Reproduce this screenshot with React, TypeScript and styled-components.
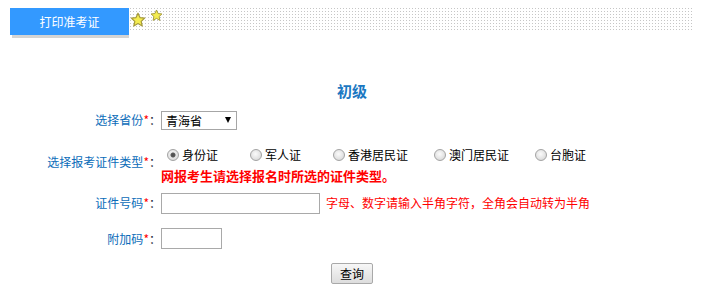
import React, { FC } from 'react';
import styled, { createGlobalStyle } from 'styled-components';

const GlobalStyle = createGlobalStyle`
  html, body {
    margin: 0;
    padding: 0;
    background: #ffffff;
  }
  body {
    font-family: "Noto Sans CJK SC", "Liberation Sans", sans-serif;
    font-size: 12px;
    color: #000;
  }
`;

const Page = styled.div`
  width: 684px;
  padding: 8px 32px 0 10px;
`;

const Header = styled.div`
  display: flex;
  align-items: flex-start;
  height: 30px;
`;

const Tab = styled.div`
  position: relative;
  width: 119px;
  height: 27px;
  display: flex;
  align-items: center;
  justify-content: center;
  background: #3399ff;
  color: #fff;
  font-size: 12px;
  line-height: 27px;

  &::after {
    content: '';
    position: absolute;
    left: 2px;
    right: 0;
    bottom: -3px;
    height: 3px;
    background: #d4d4d4;
  }
`;

const Dots = styled.div`
  position: relative;
  flex: 1;
  height: 22px;
  margin-left: 1px;
  background-color: #fff;
  background-image:
    linear-gradient(to right, transparent 1px, #fff 1px),
    linear-gradient(to bottom, #c6c6c6 1px, transparent 1px);
  background-size: 3px 3px, 3px 3px;
`;

const StarBox = styled.svg<{ $left: number; $top: number }>`
  position: absolute;
  left: ${p => p.$left}px;
  top: ${p => p.$top}px;
`;

const Star: FC<{ left: number; top: number; size: number }> = ({ left, top, size }) => (
  <StarBox $left={left} $top={top} width={size} height={size} viewBox="0 0 24 24">
    <polygon
      points="12,1.8 15,8.4 22,9.2 16.8,14 18.3,21 12,17.4 5.7,21 7.2,14 2,9.2 9,8.4"
      fill="#f4ec50"
      stroke="#a59a3c"
      strokeWidth="1.8"
      strokeLinejoin="round"
    />
  </StarBox>
);

const Title = styled.div`
  margin-top: 43px;
  height: 20px;
  line-height: 20px;
  text-align: center;
  font-size: 15px;
  font-weight: bold;
  color: #1b78c2;
`;

const FormGrid = styled.div`
  display: grid;
  grid-template-columns: 151px 1fr;
  grid-template-rows: 38px 46px 36px 35px;
`;

const Label = styled.div`
  display: flex;
  align-items: center;
  justify-content: flex-end;
  color: #0b6cb9;
  line-height: 16px;
  white-space: nowrap;
`;

const Required = styled.span`
  color: #ff0000;
`;

const Colon = styled.span`
  color: #1c2a3a;
`;

const Field = styled.div<{ $top?: boolean }>`
  display: flex;
  flex-direction: ${p => (p.$top ? 'column' : 'row')};
  align-items: ${p => (p.$top ? 'flex-start' : 'center')};
  padding-top: ${p => (p.$top ? '6px' : '0')};
`;

const SelectWrap = styled.div`
  position: relative;
  width: 76px;
  height: 19px;
`;

const Select = styled.select`
  appearance: none;
  -webkit-appearance: none;
  width: 100%;
  height: 100%;
  margin: 0;
  padding: 0 0 0 4px;
  border: 1px solid #a6a6a6;
  border-radius: 0;
  background: #fff;
  font-family: inherit;
  font-size: 12px;
  color: #000;
  outline: none;
`;

const Arrow = styled.span`
  position: absolute;
  right: 6px;
  top: 6px;
  width: 0;
  height: 0;
  border-left: 3.5px solid transparent;
  border-right: 3.5px solid transparent;
  border-top: 6px solid #000;
  pointer-events: none;
`;

const RadioRow = styled.div`
  display: flex;
  align-items: center;
  height: 20px;
  padding-left: 6px;
`;

const RadioOption = styled.label<{ $width?: number }>`
  display: inline-flex;
  align-items: center;
  width: ${p => (p.$width ? `${p.$width}px` : 'auto')};
  color: #000;
  line-height: 20px;
`;

const Radio = styled.input.attrs({ type: 'radio' })`
  appearance: none;
  -webkit-appearance: none;
  width: 12px;
  height: 12px;
  margin: 0 3px 0 0;
  border-radius: 50%;
  border: 1px solid #a3a3a3;
  background: radial-gradient(circle at 45% 40%, #fbfbfb 0, #e4e4e4 55%, #cfcfcf 100%);
  box-sizing: border-box;

  &:checked {
    background:
      radial-gradient(circle at 50% 50%, #4e4e4e 0, #5a5a5a 2px, rgba(90,90,90,0) 3px),
      radial-gradient(circle at 45% 40%, #fbfbfb 0, #e4e4e4 55%, #cfcfcf 100%);
  }
`;

const Warning = styled.div`
  margin-top: 1px;
  height: 20px;
  line-height: 20px;
  font-size: 13px;
  font-weight: bold;
  color: #ff0000;
`;

const TextInput = styled.input<{ $width: number }>`
  width: ${p => p.$width}px;
  height: 21px;
  margin: 0;
  padding: 0 2px;
  border: 1px solid #a9a9a9;
  box-sizing: border-box;
  font-family: inherit;
  font-size: 12px;
  outline: none;
`;

const Hint = styled.span`
  margin-left: 6px;
  color: #ff0000;
  line-height: 16px;
  white-space: nowrap;
`;

const ButtonRow = styled.div`
  display: flex;
  justify-content: center;
  margin-top: 7px;
`;

const Button = styled.button`
  width: 42px;
  height: 21px;
  padding: 0;
  border: 1px solid #a9a9a9;
  border-radius: 2px;
  background: linear-gradient(#f7f7f7, #dddddd);
  font-family: inherit;
  font-size: 12px;
  color: #000;
  line-height: 19px;
`;

const FieldLabel: FC<{ text: string }> = ({ text }) => (
  <Label>
    {text}
    <Required>*</Required>
    <Colon>：</Colon>
  </Label>
);

const options = [
  { text: '身份证', width: 83, checked: true },
  { text: '军人证', width: 83 },
  { text: '香港居民证', width: 101 },
  { text: '澳门居民证', width: 101 },
  { text: '台胞证' },
];

const App: FC = () => (
  <>
    <GlobalStyle />
    <Page>
      <Header>
        <Tab>打印准考证</Tab>
        <Dots>
          <Star left={0} top={4} size={16} />
          <Star left={20} top={1} size={13} />
        </Dots>
      </Header>
      <Title>初级</Title>
      <FormGrid>
        <FieldLabel text="选择省份" />
        <Field>
          <SelectWrap>
            <Select defaultValue="qh">
              <option value="qh">青海省</option>
            </Select>
            <Arrow />
          </SelectWrap>
        </Field>

        <FieldLabel text="选择报考证件类型" />
        <Field $top>
          <RadioRow>
            {options.map(o => (
              <RadioOption key={o.text} $width={o.width}>
                <Radio name="idtype" defaultChecked={o.checked} />
                {o.text}
              </RadioOption>
            ))}
          </RadioRow>
          <Warning>网报考生请选择报名时所选的证件类型。</Warning>
        </Field>

        <FieldLabel text="证件号码" />
        <Field>
          <TextInput $width={159} />
          <Hint>字母、数字请输入半角字符，全角会自动转为半角</Hint>
        </Field>

        <FieldLabel text="附加码" />
        <Field>
          <TextInput $width={61} />
        </Field>
      </FormGrid>
      <ButtonRow>
        <Button>查询</Button>
      </ButtonRow>
    </Page>
  </>
);

export default App;
